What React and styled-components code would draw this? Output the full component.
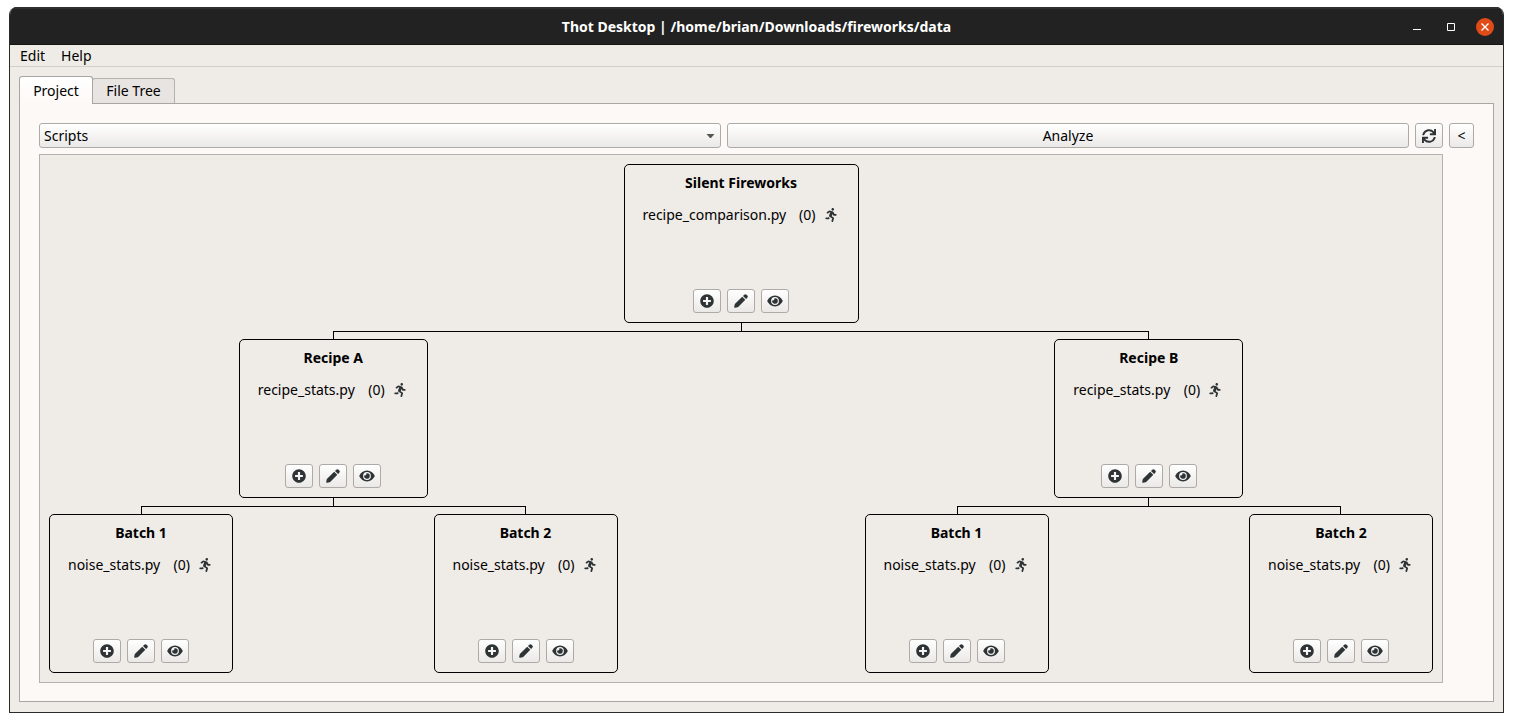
import React from "react";
import styled, { createGlobalStyle } from "styled-components";
import { FaPlusCircle, FaRunning, FaSync } from "react-icons/fa";

const GlobalStyle = createGlobalStyle`
  *, *::before, *::after { box-sizing: border-box; }
  body {
    margin: 0;
    background: #ffffff;
    color: #000000;
    font-family: "Noto Sans", "Open Sans", sans-serif;
    font-size: 14px;
    line-height: 20px;
  }
  button, select { font: inherit; color: inherit; }
`;

const Window = styled.div`
  margin: 7px 9px 9px;
  border: 1px solid #2b2b2b;
  border-top: 0;
  border-radius: 8px 8px 0 0;
  background: #efebe7;
  overflow: hidden;
`;

const TitleBar = styled.header`
  display: grid;
  grid-template-columns: 1fr auto 1fr;
  align-items: center;
  height: 38px;
  padding: 0 9px;
  border-top: 2px solid #303030;
  border-bottom: 1px solid #151515;
  background: #222222;
  color: #ffffff;
`;

const Title = styled.h1`
  grid-column: 2;
  margin: 0;
  font-size: 14px;
  font-weight: 700;
  white-space: nowrap;
`;

const WindowControls = styled.div`
  display: flex;
  justify-content: flex-end;
  gap: 16px;
`;

const WindowButton = styled.button`
  display: grid;
  place-items: center;
  width: 18px;
  height: 18px;
  padding: 0;
  border: 0;
  border-radius: 50%;
  background: ${(p) => (p.$close ? "#e04b18" : "transparent")};
`;

const MenuBar = styled.nav`
  display: flex;
  gap: 16px;
  height: 22px;
  padding: 0 10px;
  border-bottom: 1px solid #d4cfca;
`;

const MenuButton = styled.button`
  padding: 0;
  border: 0;
  background: transparent;
`;

const Workspace = styled.main`
  padding: 9px 9px 10px;
`;

const Tabs = styled.div`
  display: flex;
  align-items: flex-end;
`;

const Tab = styled.button`
  position: relative;
  height: ${(p) => (p.$active ? 28 : 25)}px;
  width: ${(p) => (p.$active ? 74 : 83)}px;
  margin-bottom: ${(p) => (p.$active ? -1 : 0)}px;
  margin-right: -1px;
  padding: 0;
  border: 1px solid ${(p) => (p.$active ? "#aaa6a3" : "#b6b2af")};
  border-bottom: 0;
  border-radius: 3px 3px 0 0;
  background: ${(p) =>
    p.$active ? "linear-gradient(#ffffff, #fdf9f6)" : "#e8e4e1"};
  z-index: ${(p) => (p.$active ? 1 : 0)};
`;

const Panel = styled.section`
  padding: 19px 19px 18px;
  border: 1px solid #aaa6a3;
  background: #fdf9f6;
`;

const Toolbar = styled.div`
  display: grid;
  grid-template-columns: 1fr 1fr 28px 25px;
  gap: 6px;
  margin-bottom: 6px;
`;

const raised = `
  border: 1px solid #aeaaa8;
  border-radius: 3px;
  background: linear-gradient(#ffffff, #ebe9e7);
`;

const SelectBox = styled.div`
  position: relative;
`;

const Select = styled.select`
  ${raised}
  display: block;
  appearance: none;
  width: 100%;
  height: 25px;
  padding: 0 24px 0 4px;
`;

const SelectArrow = styled.svg`
  position: absolute;
  top: 11px;
  right: 6px;
  pointer-events: none;
`;

const ToolButton = styled.button`
  ${raised}
  display: grid;
  place-items: center;
  height: 25px;
  padding: 0;
`;

const Canvas = styled.div`
  margin-right: 31px;
  padding: 9px;
  border: 1px solid #b5b1ae;
  background: #efebe7;
`;

const Tree = styled.div`
  display: flex;
  flex-direction: column;
  align-items: center;
  flex: ${(p) => (p.$grow ? "1 1 0" : "none")};
`;

const Card = styled.article`
  display: flex;
  flex-direction: column;
  width: ${(p) => p.$width}px;
  height: 159px;
  padding: 8px 18px 9px;
  border: 1px solid #000000;
  border-radius: 5px;
`;

const CardTitle = styled.h2`
  margin: 0 0 12px;
  font-size: 14px;
  font-weight: 700;
  text-align: center;
`;

const ScriptRow = styled.div`
  display: flex;
  align-items: center;
  gap: 8px;
  padding-right: 2px;
  white-space: nowrap;
`;

const ScriptName = styled.span`
  flex: 1;
`;

const RunButton = styled.button`
  display: grid;
  place-items: center;
  width: 14px;
  height: 20px;
  padding: 0;
  border: 0;
  background: transparent;
  color: #2e3436;
`;

const Actions = styled.div`
  display: flex;
  justify-content: center;
  gap: 6px;
  margin-top: auto;
`;

const ActionButton = styled.button`
  ${raised}
  display: grid;
  place-items: center;
  width: 28px;
  height: 24px;
  padding: 0;
  color: #2e3436;
`;

const Stem = styled.div`
  width: 1px;
  height: 8px;
  background: #000000;
`;

const Fork = styled.div`
  align-self: stretch;
  height: 8px;
  margin: 0 ${(p) => p.$inset};
  border: 1px solid #000000;
  border-bottom: 0;
`;

const Branches = styled.div`
  display: flex;
  align-self: stretch;
  justify-content: space-between;
  gap: ${(p) => p.$gap}px;
`;

const BRANCH_GAP = 247;

const project = {
  name: "Silent Fireworks",
  script: "recipe_comparison.py",
  width: 235,
  gap: BRANCH_GAP,
  inset: `calc((100% - ${BRANCH_GAP}px) / 4)`,
  children: ["Recipe A", "Recipe B"].map((name) => ({
    name,
    script: "recipe_stats.py",
    width: 189,
    gap: 20,
    inset: "92px",
    children: ["Batch 1", "Batch 2"].map((batch) => ({
      name: batch,
      script: "noise_stats.py",
      width: 184,
    })),
  })),
};

function PenIcon() {
  return (
    <svg width="14" height="14" viewBox="0 0 14 14" fill="currentColor">
      <path d="M8.2 2.7 11.3 5.8 4.2 12.9Q3.9 13.2 3.4 13.3L1.2 13.8Q0 14 .2 12.8L.7 10.6Q.8 10.1 1.1 9.8Z" />
      <path d="M9 1.9 10.2.7Q11.4-.4 12.6.7L13.3 1.4Q14.4 2.6 13.3 3.8L12.1 5Z" />
    </svg>
  );
}

function EyeIcon() {
  return (
    <svg width="16" height="12" viewBox="0 0 16 12" fill="currentColor">
      <path
        fillRule="evenodd"
        d="M8 .6C11.6.6 14.2 2.9 15.6 5.5Q15.9 6 15.6 6.5C14.2 9.1 11.6 11.4 8 11.4S1.800 9.1.4 6.500Q.1 6 .4 5.500C1.800 2.900 4.400.6 8 .6ZM8 2.100A3.900 3.900 0 1 0 8 9.900 3.900 3.900 0 1 0 8 2.100Z"
      />
      <path d="M8 3.200A2.800 2.800 0 1 1 5.300 5.300 1.500 1.500 0 0 0 7.300 3.300Q7.600 3.200 8 3.200Z" />
    </svg>
  );
}

function Node({ node, grow }) {
  return (
    <Tree $grow={grow}>
      <Card $width={node.width}>
        <CardTitle>{node.name}</CardTitle>
        <ScriptRow>
          <ScriptName>{node.script}</ScriptName>
          <span>(0)</span>
          <RunButton aria-label={`Run ${node.script}`}>
            <FaRunning size={14} />
          </RunButton>
        </ScriptRow>
        <Actions>
          <ActionButton aria-label="Add">
            <FaPlusCircle size={14} />
          </ActionButton>
          <ActionButton aria-label="Edit">
            <PenIcon />
          </ActionButton>
          <ActionButton aria-label="View">
            <EyeIcon />
          </ActionButton>
        </Actions>
      </Card>
      {node.children && (
        <>
          <Stem />
          <Fork $inset={node.inset} />
          <Branches $gap={node.gap}>
            {node.children.map((child) => (
              <Node key={child.name} node={child} grow={!!child.children} />
            ))}
          </Branches>
        </>
      )}
    </Tree>
  );
}

export default function App() {
  return (
    <>
      <GlobalStyle />
      <Window>
        <TitleBar>
          <Title>Thot Desktop | /home/brian/Downloads/fireworks/data</Title>
          <WindowControls>
            <WindowButton aria-label="Minimize">
              <svg width="8" height="8" viewBox="0 0 8 8">
                <path d="M0 6.5h8" stroke="#fff" />
              </svg>
            </WindowButton>
            <WindowButton aria-label="Maximize">
              <svg width="8" height="8" viewBox="0 0 8 8">
                <path d="M.5.5h7v7h-7z" stroke="#fff" fill="none" />
              </svg>
            </WindowButton>
            <WindowButton $close aria-label="Close">
              <svg width="8" height="8" viewBox="0 0 8 8">
                <path d="M.5.5l7 7M7.5.5l-7 7" stroke="#fff" strokeWidth="1.4" />
              </svg>
            </WindowButton>
          </WindowControls>
        </TitleBar>
        <MenuBar>
          <MenuButton>Edit</MenuButton>
          <MenuButton>Help</MenuButton>
        </MenuBar>
        <Workspace>
          <Tabs role="tablist">
            <Tab role="tab" aria-selected="true" $active>
              Project
            </Tab>
            <Tab role="tab" aria-selected="false">
              File Tree
            </Tab>
          </Tabs>
          <Panel role="tabpanel">
            <Toolbar>
              <SelectBox>
                <Select aria-label="Scripts">
                  <option>Scripts</option>
                </Select>
                <SelectArrow width="9" height="5" viewBox="0 0 9 5">
                  <path d="M.5 0h8L5 4H4z" fill="#555753" />
                </SelectArrow>
              </SelectBox>
              <ToolButton>Analyze</ToolButton>
              <ToolButton aria-label="Refresh">
                <FaSync size={14} color="#2e3436" />
              </ToolButton>
              <ToolButton>&lt;</ToolButton>
            </Toolbar>
            <Canvas>
              <Node node={project} />
            </Canvas>
          </Panel>
        </Workspace>
      </Window>
    </>
  );
}
